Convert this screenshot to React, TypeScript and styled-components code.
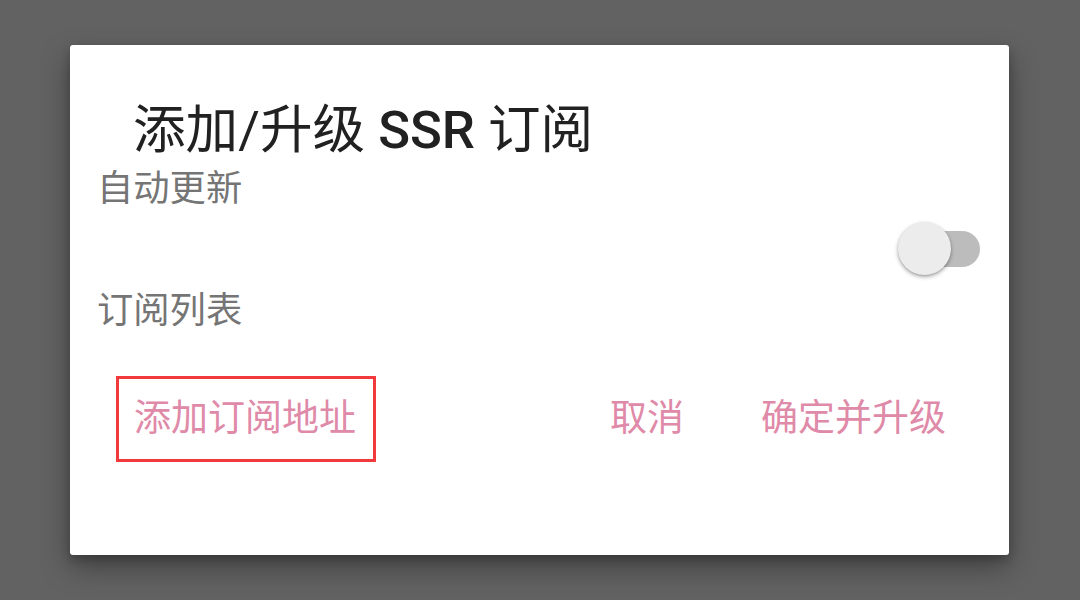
import React from "react";
import styled, { createGlobalStyle } from "styled-components";

const Global = createGlobalStyle`
  html, body { margin: 0; padding: 0; }
  body {
    width: 1080px;
    height: 600px;
    background: #626262;
    font-family: Roboto, "Noto Sans CJK SC", sans-serif;
    overflow: hidden;
  }
`;

const Screen = styled.div`
  width: 1080px;
  height: 600px;
  padding: 45px 71px 45px 70px;
  box-sizing: border-box;
  display: flex;
`;

const Dialog = styled.div`
  flex: 1;
  background: #ffffff;
  border-radius: 3px;
  box-shadow: 0 12px 28px rgba(0, 0, 0, 0.35), 0 4px 10px rgba(0, 0, 0, 0.2);
  padding: 57px 29px 0 27px;
  box-sizing: border-box;
  display: flex;
  flex-direction: column;
`;

const Title = styled.h1`
  margin: 0 0 0 36px;
  font-size: 52.6px;
  line-height: 56px;
  font-weight: 400;
  color: #212121;
  font-family: Roboto, "Noto Sans CJK SC", sans-serif;
  white-space: nowrap;
`;

const TitleLatin = styled.span`
  font-weight: 500;
`;

const Label = styled.div<{ $top: number }>`
  margin-top: ${(p) => p.$top}px;
  font-size: 36.3px;
  line-height: 40px;
  color: #757575;
`;

const SwitchRow = styled.div`
  margin-top: 13px;
  display: flex;
  justify-content: flex-end;
  height: 54px;
  align-items: center;
`;

const Switch = styled.div`
  position: relative;
  width: 82px;
  height: 54px;
`;

const Track = styled.div`
  position: absolute;
  right: 0;
  top: 9px;
  width: 80px;
  height: 36px;
  border-radius: 18px;
  background: #bcbcbc;
`;

const Thumb = styled.div`
  position: absolute;
  left: 0;
  top: 0;
  width: 53px;
  height: 53px;
  border-radius: 50%;
  background: #ececec;
  box-shadow: 0 2px 4px rgba(0, 0, 0, 0.3), 0 1px 2px rgba(0, 0, 0, 0.15);
`;

const Actions = styled.div`
  margin-top: 45px;
  display: flex;
  align-items: center;
  padding-right: 34px;
`;

const LeftGroup = styled.div`
  margin-left: 19px;
  flex: 1;
  display: flex;
`;

const RightGroup = styled.div`
  display: flex;
`;

const ActionButton = styled.button<{ $outlined?: boolean }>`
  background: none;
  border: ${(p) => (p.$outlined ? "3px solid #f2393b" : "none")};
  margin: 0;
  margin-left: ${(p) => (p.$outlined ? 0 : 77)}px;
  padding: ${(p) => (p.$outlined ? "0 17px 0 15px" : "0")};
  height: 86px;
  box-sizing: border-box;
  font-family: Roboto, "Noto Sans CJK SC", sans-serif;
  font-size: 37px;
  line-height: 40px;
  color: #df8aa8;
  cursor: pointer;
  white-space: nowrap;
`;

export default function App() {
  return (
    <>
      <Global />
      <Screen>
        <Dialog>
          <Title>
            添加/升级 <TitleLatin>SSR</TitleLatin> 订阅
          </Title>
          <Label $top={11}>自动更新</Label>
          <SwitchRow>
            <Switch>
              <Track />
              <Thumb />
            </Switch>
          </SwitchRow>
          <Label $top={15}>订阅列表</Label>
          <Actions>
            <LeftGroup>
              <ActionButton $outlined>添加订阅地址</ActionButton>
            </LeftGroup>
            <RightGroup>
              <ActionButton>取消</ActionButton>
              <ActionButton>确定并升级</ActionButton>
            </RightGroup>
          </Actions>
        </Dialog>
      </Screen>
    </>
  );
}
